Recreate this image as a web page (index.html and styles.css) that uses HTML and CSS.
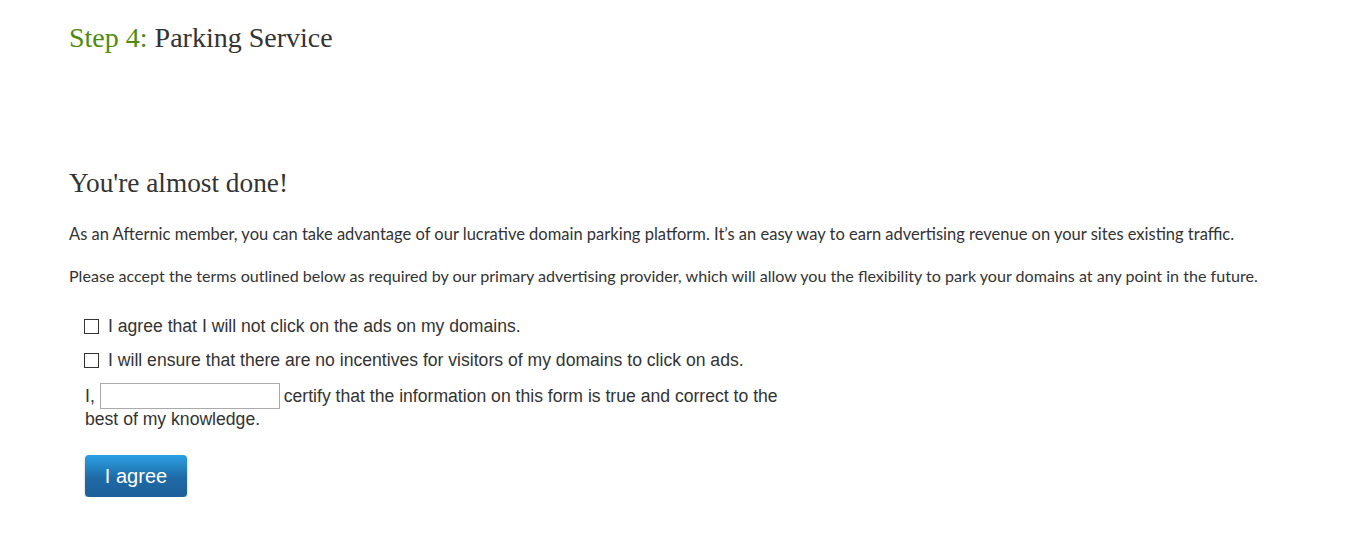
FILE: index.html
```html
<!DOCTYPE html>
<html>
<head>
<meta charset="utf-8">
<link rel="stylesheet" href="styles.css">
</head>
<body>
<div class="page">
  <h1 class="step"><span class="step-num">Step 4:</span> Parking Service</h1>
  <h2 class="subtitle">You're almost done!</h2>
  <p class="para para-lead">As an Afternic member, you can take advantage of our lucrative domain parking platform. It’s an easy way to earn advertising revenue on your sites existing traffic.</p>
  <p class="para">Please accept the terms outlined below as required by our primary advertising provider, which will allow you the flexibility to park your domains at any point in the future.</p>
  <form class="terms">
    <label class="check-row"><span class="box"></span>I agree that I will not click on the ads on my domains.</label>
    <label class="check-row"><span class="box"></span>I will ensure that there are no incentives for visitors of my domains to click on ads.</label>
    <div class="certify">I,<span class="name-input"></span>certify that the information on this form is true and correct to the best of my knowledge.</div>
    <div class="btn">I agree</div>
  </form>
</div>
</body>
</html>
```
FILE: styles.css
```css
html, body { margin: 0; padding: 0; background: #fff; }
body { color: #333; font-family: "Lato", sans-serif; }
.page { padding: 18px 0 0 69px; }
.step {
  margin: 0;
  font-family: "Liberation Serif", serif;
  font-weight: normal;
  font-size: 28px;
  line-height: 40px;
  color: #333;
}
.step-num { color: #4f8a10; }
.subtitle {
  margin: 105px 0 0;
  font-family: "Liberation Serif", serif;
  font-weight: normal;
  font-size: 27.3px;
  line-height: 40px;
  color: #333;
}
.para {
  margin: 19px 0 0;
  font-size: 16.1px;
  line-height: 24px;
}
.para-lead { font-size: 16.5px; }
.para + .para { margin-top: 18px; }
.terms {
  margin: 27px 0 0 16px;
  font-family: "Liberation Sans", Arial, sans-serif;
  font-size: 17.6px;
  width: 700px;
}
.check-row {
  display: flex;
  align-items: center;
  height: 22px;
  margin-bottom: 12px;
}
.box {
  width: 15px; height: 15px;
  border: 1px solid #333;
  box-sizing: border-box;
  margin: 0 9px 0 -1px;
  background: #fff;
}
.certify { line-height: 20px; margin-top: 12px; }
.name-input {
  display: inline-block;
  width: 180px; height: 26px;
  border: 1px solid #aaa;
  box-sizing: border-box;
  vertical-align: -7px;
  margin: 0 4px 0 5px;
}
.btn {
  margin-top: 26px;
  width: 102px; height: 42px;
  border-radius: 4px;
  background: linear-gradient(#2aa0e4, #1f6aa6 55%, #1d5f99);
  color: #fff;
  font-size: 20px;
  line-height: 42px;
  text-align: center;
  box-shadow: 0 1px 2px rgba(0,0,0,0.3);
}
```
